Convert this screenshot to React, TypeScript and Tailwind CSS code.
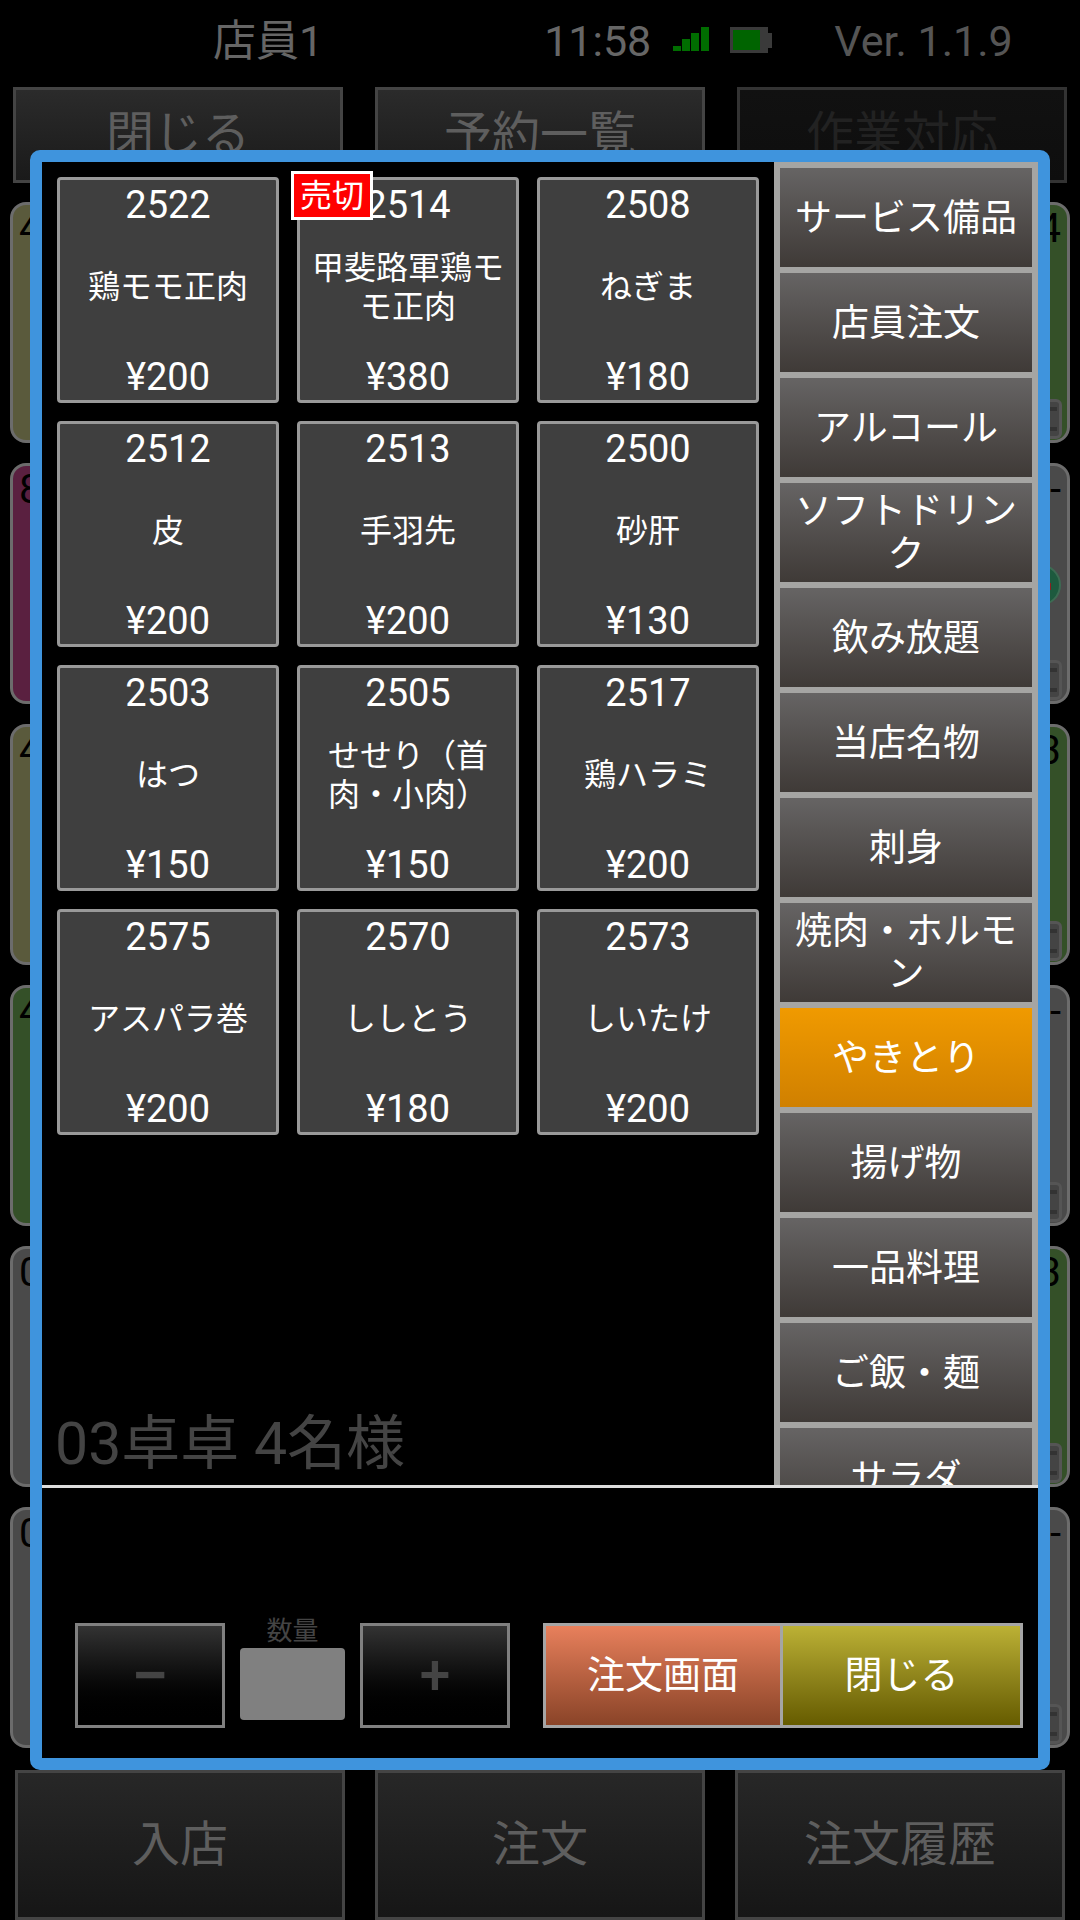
const font = "font-['Roboto','Noto_Sans_CJK_JP',sans-serif]";

const items = [
  { no: '2522', name: '鶏モモ正肉', price: '¥200' },
  { no: '2514', name: '甲斐路軍鶏モモ正肉', price: '¥380', soldOut: true },
  { no: '2508', name: 'ねぎま', price: '¥180' },
  { no: '2512', name: '皮', price: '¥200' },
  { no: '2513', name: '手羽先', price: '¥200' },
  { no: '2500', name: '砂肝', price: '¥130' },
  { no: '2503', name: 'はつ', price: '¥150' },
  { no: '2505', name: 'せせり（首肉・小肉）', price: '¥150' },
  { no: '2517', name: '鶏ハラミ', price: '¥200' },
  { no: '2575', name: 'アスパラ巻', price: '¥200' },
  { no: '2570', name: 'ししとう', price: '¥180' },
  { no: '2573', name: 'しいたけ', price: '¥200' },
];

const categories = [
  'サービス備品', '店員注文', 'アルコール', 'ソフトドリンク', '飲み放題', '当店名物', '刺身',
  '焼肉・ホルモン', 'やきとり', '揚げ物', '一品料理', 'ご飯・麺', 'サラダ',
];

const olive = 'bg-[#5a5a3c]';
const magenta = 'bg-[#5a2040]';
const green = 'bg-[#345028]';
const gray = 'bg-[#4a4a4a]';

const leftTables = [
  { bg: olive, text: '4' }, { bg: magenta, text: '8' }, { bg: olive, text: '4' },
  { bg: green, text: '4' }, { bg: gray, text: '0' }, { bg: gray, text: '0' },
];
const rightTables = [
  { bg: green, text: '4' }, { bg: gray, text: '--', call: true }, { bg: green, text: '3' },
  { bg: gray, text: '--' }, { bg: green, text: '3' }, { bg: gray, text: '--' },
];

const TopButton = ({ label, dim }: { label: string; dim?: boolean }) => (
  <div
    className={`h-[96px] border-[3px] flex items-center justify-center text-[48px] ${
      dim
        ? 'border-[#333] bg-gradient-to-b from-[#111] to-[#0e0e0e] text-[#222]'
        : 'border-[#444] bg-gradient-to-b from-[#2b2b2b] to-[#1a1a1a] text-[#5e5e5e]'
    }`}
  >
    {label}
  </div>
);

const BottomButton = ({ label }: { label: string }) => (
  <div className="h-[150px] border-[3px] border-[#444] bg-gradient-to-b from-[#272727] to-[#161616] flex items-center justify-center text-[48px] text-[#5e5e5e]">
    {label}
  </div>
);

const TableCard = ({ t, side }: { t: { bg: string; text: string; call?: boolean }; side: 'l' | 'r' }) => (
  <div className={`relative h-[241px] rounded-[16px] border-[3px] border-[#6c6c6c] px-[6px] text-[40px] leading-[48px] text-black ${t.bg}`}>
    <div className={`flex ${side === 'l' ? 'justify-start' : 'justify-end'}`}>{t.text}</div>
    {side === 'r' && (
      <div className="absolute bottom-[1px] right-[5px] w-[40px] h-[40px] rounded-[6px] border-[3px] border-[#555] bg-[#444] flex items-center px-[2px]">
        <div className="w-full h-[24px] border-y-[4px] border-[#333]" />
      </div>
    )}
    {t.call && (
      <div className="absolute top-[98px] right-[6px] w-[42px] h-[42px] rounded-full border-[2px] border-[#3d6b53] bg-[#1d5a3e]">
        <div className="absolute left-[27px] top-[17px] w-[3px] h-[7px] bg-[#8a2020]" />
      </div>
    )}
  </div>
);

const ItemCard = ({ item }: { item: (typeof items)[number] }) => (
  <div className="relative flex flex-col items-center rounded-[4px] border-[3px] border-[#999] bg-[#3f3f3f] text-white text-center">
    <div className="mt-[2px] h-[46px] text-[38px] leading-[46px]">{item.no}</div>
    <div className="flex-1 flex items-center justify-center px-[8px] pb-[7px] text-[32px] leading-[39px]">{item.name}</div>
    <div className="h-[46px] text-[38px] leading-[46px]">{item.price}</div>
    {item.soldOut && (
      <div className="absolute left-[-9px] top-[-9px] w-[82px] h-[49px] border-[3px] border-white bg-[#f00] flex items-center justify-center text-[32px] leading-none text-white">
        売切
      </div>
    )}
  </div>
);

const SignalIcon = () => (
  <svg width="36" height="24" viewBox="0 0 36 24" className="ml-[22px]" fill="#006d00">
    <rect x="0" y="19" width="8" height="5" />
    <rect x="9" y="12" width="8" height="12" />
    <rect x="18" y="6" width="8" height="18" />
    <rect x="28" y="0" width="8" height="24" />
  </svg>
);

const BatteryIcon = () => (
  <svg width="42" height="26" viewBox="0 0 42 26" className="ml-[21px]">
    <rect x="0" y="0" width="38" height="26" fill="#3a3a3a" />
    <rect x="38" y="6" width="4" height="15" fill="#3a3a3a" />
    <rect x="3" y="3" width="27" height="20" fill="#006400" />
  </svg>
);

const QtyButton = ({ label, size }: { label: string; size: string }) => (
  <div className={`w-[150px] h-[105px] border-[3px] border-[#808080] bg-gradient-to-b from-[#333] to-[#000] flex items-center justify-center font-medium leading-none text-[#444] ${size}`}>
    {label}
  </div>
);

export default function App() {
  return (
    <div className={`relative w-[1080px] h-[1920px] bg-black overflow-hidden flex flex-col ${font}`}>
      {/* header */}
      <div className="h-[87px] flex items-start pt-[16px] text-[43px] leading-[50px] text-[#666]">
        <span className="ml-[213px]">店員1</span>
        <span className="ml-[221px]">11:58</span>
        <div className="mt-[11px] flex items-start">
          <SignalIcon />
          <BatteryIcon />
        </div>
        <span className="ml-[62px] text-[#555]">Ver. 1.1.9</span>
      </div>

      <div className="grid grid-cols-3 gap-x-[32px] pl-[13px] pr-[13px]">
        <TopButton label="閉じる" />
        <TopButton label="予約一覧" />
        <TopButton label="作業対応" dim />
      </div>

      {/* tables behind the dialog */}
      <div className="mt-[19px] px-[10px] grid grid-cols-2 gap-x-[394px]">
        <div className="flex flex-col gap-y-[20px]">
          {leftTables.map((t, i) => <TableCard key={i} t={t} side="l" />)}
        </div>
        <div className="flex flex-col gap-y-[20px]">
          {rightTables.map((t, i) => <TableCard key={i} t={t} side="r" />)}
        </div>
      </div>

      <div className="mt-auto grid grid-cols-3 gap-x-[30px] px-[15px]">
        <BottomButton label="入店" />
        <BottomButton label="注文" />
        <BottomButton label="注文履歴" />
      </div>

      {/* dialog */}
      <div className="absolute left-[30px] top-[150px] w-[1020px] h-[1620px] box-border border-[12px] border-[#3f94dd] rounded-[10px] bg-black flex flex-col">
        <div className="h-[1323px] flex">
          <div className="flex-1 flex flex-col justify-between">
            <div className="pl-[15px] pt-[15px] grid grid-cols-[repeat(3,222px)] auto-rows-[226px] gap-[18px]">
              {items.map((item) => <ItemCard key={item.no} item={item} />)}
            </div>
            <div className="pl-[13px] pb-[9px] text-[59px] leading-[64px] text-[#444]">03卓卓 4名様</div>
          </div>
          <div className="w-[264px] bg-[#a5a5a3] px-[6px] pt-[6px] flex flex-col gap-y-[6px] overflow-hidden">
            {categories.map((c) => (
              <div
                key={c}
                className={`shrink-0 h-[99px] pt-[1px] flex items-center justify-center text-center text-[37px] leading-[43px] text-white bg-gradient-to-b ${
                  c === 'やきとり' ? 'from-[#f09a00] to-[#d08000]' : 'from-[#666464] to-[#3f3a37]'
                }`}
              >
                {c}
              </div>
            ))}
          </div>
        </div>

        <div className="h-[3px] bg-[#ddd]" />

        <div className="flex-1 flex items-end pb-[30px] pl-[33px]">
          <QtyButton label="−" size="text-[68px]" />
          <div className="mx-[15px] w-[105px] flex flex-col items-center">
            <div className="text-[26px] leading-[30px] text-[#444]">数量</div>
            <div className="mt-[2px] mb-[8px] w-[105px] h-[72px] rounded-[4px] bg-[#808080]" />
          </div>
          <QtyButton label="+" size="text-[55px]" />
          <div className="ml-[33px] flex h-[105px] text-[38px] text-white">
            <div className="w-[240px] border-[3px] border-[#a5a5a5] bg-gradient-to-b from-[#e8805c] to-[#8a4428] flex items-center justify-center">
              注文画面
            </div>
            <div className="w-[240px] border-[3px] border-l-0 border-[#a5a5a5] bg-gradient-to-b from-[#bcb135] to-[#665c00] flex items-center justify-center">
              閉じる
            </div>
          </div>
        </div>
      </div>
    </div>
  );
}
